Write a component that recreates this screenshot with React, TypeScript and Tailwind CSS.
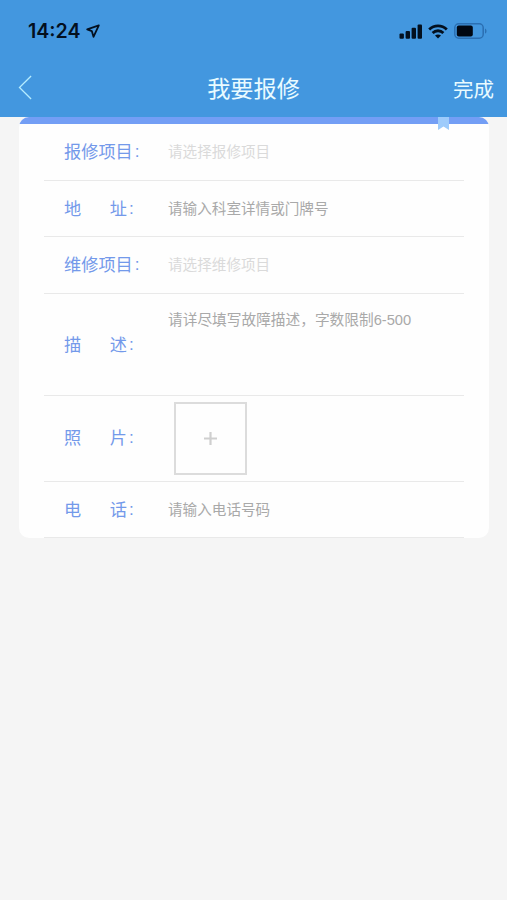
import { useState } from 'react';

type Field = {
  id: string;
  label: string[];
  placeholder: string;
  kind: 'select' | 'text' | 'textarea' | 'photo';
  row: string;
};

const fields: Field[] = [
  { id: 'item', label: ['报修项目'], placeholder: '请选择报修项目', kind: 'select', row: 'h-[57px] pt-[2px]' },
  { id: 'address', label: ['地', '址'], placeholder: '请输入科室详情或门牌号', kind: 'text', row: 'h-14 pt-[2px]' },
  { id: 'repair', label: ['维修项目'], placeholder: '请选择维修项目', kind: 'select', row: 'h-[57px] pt-px' },
  { id: 'description', label: ['描', '述'], placeholder: '请详尽填写故障描述，字数限制6-500', kind: 'textarea', row: 'h-[102px] pt-[2px]' },
  { id: 'photo', label: ['照', '片'], placeholder: '', kind: 'photo', row: 'h-[86px]' },
  { id: 'phone', label: ['电', '话'], placeholder: '请输入电话号码', kind: 'text', row: 'h-14 pt-[2px]' },
];

function StatusBar() {
  return (
    <div className="flex h-[61px] items-center justify-between pt-px pr-[20px] pl-[28px] text-[#03101f]">
      <div className="flex items-center gap-[5px]">
        <span className="pt-[2px] text-[19.6px] leading-none font-semibold">14:24</span>
        <svg width="14" height="14" viewBox="0 0 14 14" fill="none">
          <path d="M12.8 1.4 1.2 5.4l4.6 1.7 1.7 5.7z" stroke="currentColor" strokeWidth="1.8" strokeLinejoin="round" />
        </svg>
      </div>
      <div className="flex items-center gap-[6px]">
        <svg width="23" height="15" viewBox="0 0 23 15" fill="currentColor">
          <rect x="0.5" y="9.5" width="4.4" height="5.3" rx="1" />
          <rect x="6.6" y="7" width="4.4" height="7.8" rx="1" />
          <rect x="12.6" y="3.8" width="4.4" height="11" rx="1" />
          <rect x="18.6" y="0.5" width="4.4" height="14.3" rx="1" />
        </svg>
        <svg width="20" height="15" viewBox="0 0 20 15" fill="none" stroke="currentColor" strokeWidth="2.8">
          <path d="M1.2 5.4C6.2.6 13.8.6 18.8 5.4" />
          <path d="M4.6 9C7.7 6 12.3 6 15.4 9" />
          <path d="M10 14.6 7 11.6c1.7-1.5 4.3-1.5 6 0z" fill="currentColor" stroke="none" />
        </svg>
        <svg width="33" height="16" viewBox="0 0 33 16" fill="none">
          <rect x="0.8" y="0.8" width="28.4" height="14.4" rx="4" stroke="#2b6fb2" strokeWidth="1.5" />
          <rect x="2.8" y="2.6" width="16" height="10.8" rx="2" fill="#000712" />
          <path d="M31 5.4c2 .8 2 4.400 0 5.200z" fill="#2b6fb2" />
        </svg>
      </div>
    </div>
  );
}

function NavBar() {
  return (
    <div className="grid h-14 grid-cols-[1fr_auto_1fr] items-center pr-[13px] pb-[3px] pl-[18px] text-[#e9fbff]">
      <button type="button" aria-label="返回">
        <svg width="14" height="25" viewBox="0 0 14 25" fill="none">
          <path d="M13.1 1 1.5 12.5 13.1 24" stroke="#b5ecff" strokeWidth="1.3" />
        </svg>
      </button>
      <h1 className="mr-[5px] pt-[4px] text-[23.2px] leading-none font-normal">我要报修</h1>
      <button type="button" className="justify-self-end pt-[5px] text-[20.5px] leading-none">
        完成
      </button>
    </div>
  );
}

function FieldInput({ field, value, onChange }: { field: Field; value: string; onChange: (v: string) => void }) {
  if (field.kind === 'photo') {
    return (
      <button type="button" aria-label="添加照片" className="ml-[6px] flex size-[73px] items-center justify-center border-2 border-[#dcdcdc]">
        <svg width="13" height="13" viewBox="0 0 13 13">
          <path d="M6.5 0v13M0 6.500h13" stroke="#cfcfcf" strokeWidth="2.200" />
        </svg>
      </button>
    );
  }
  if (field.kind === 'select') {
    return (
      <button type="button" className="flex-1 text-left text-[14.6px] text-[#dadada]">
        {field.placeholder}
      </button>
    );
  }
  if (field.kind === 'textarea') {
    return (
      <textarea
        id={field.id}
        value={value}
        maxLength={500}
        onChange={(e) => onChange(e.target.value)}
        placeholder={field.placeholder}
        className="h-full flex-1 resize-none pt-[13px] text-[14.7px] leading-[22px] placeholder:text-[#a9a9a9] focus:outline-none"
      />
    );
  }
  return (
    <input
      id={field.id}
      value={value}
      onChange={(e) => onChange(e.target.value)}
      placeholder={field.placeholder}
      className="min-w-0 flex-1 text-[14.6px] placeholder:text-[#a9a9a9] focus:outline-none"
    />
  );
}

export default function App() {
  const [values, setValues] = useState<Record<string, string>>({});

  return (
    <main className="min-h-screen bg-[#f5f5f5] font-['Inter','Noto_Sans_CJK_SC',sans-serif]">
      <header className="h-[117px] bg-[#4397df]">
        <StatusBar />
        <NavBar />
      </header>

      {/* Form card */}
      <form className="relative mr-[18px] ml-[19px] overflow-hidden rounded-[10px] bg-[#fefefe] font-['Liberation_Sans','Noto_Sans_CJK_SC',sans-serif]">
        <div className="h-[7px] bg-[#739ef5]" />
        <svg className="absolute top-0 right-[40px]" width="11" height="13" viewBox="0 0 11 13">
          <path d="M0 0h11v13L5.5 9.5 0 13z" fill="#9dcbfb" />
        </svg>
        <div className="mr-[25px] ml-[25px]">
          {fields.map((field) => (
            <div key={field.id} className={`flex items-center border-b border-[#e9e9e9] pl-5 ${field.row}`}>
              <label htmlFor={field.id} className="flex w-[104px] shrink-0 text-[17.2px] text-[#7399ea]">
                {field.label.length > 1 ? (
                  <span className="flex w-[63px] justify-between">
                    <span>{field.label[0]}</span>
                    <span>{field.label[1]}</span>
                  </span>
                ) : (
                  <span>{field.label[0]}</span>
                )}
                <span className="-mt-px ml-[2px]">:</span>
              </label>
              <FieldInput
                field={field}
                value={values[field.id] ?? ''}
                onChange={(v) => setValues({ ...values, [field.id]: v })}
              />
            </div>
          ))}
        </div>
      </form>
    </main>
  );
}
